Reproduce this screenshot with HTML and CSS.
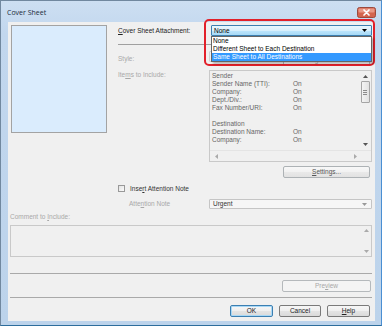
FILE: index.html
```html
<!DOCTYPE html>
<html>
<head>
<meta charset="utf-8">
<link rel="stylesheet" href="styles.css">
</head>
<body>
<div class="window">
  <div class="titlebar">
    <span class="title">Cover Sheet</span>
    <svg class="close" width="19" height="11" viewBox="0 0 19 11">
      <rect x="0.5" y="0.5" width="18" height="10" rx="2" fill="#d3644e" stroke="#9b4a3d"/>
      <rect x="1.5" y="1.5" width="16" height="4" rx="1" fill="#e99886"/>
      <path d="M7 3 L12 8 M12 3 L7 8" stroke="#fff" stroke-width="1.7" stroke-linecap="round"/>
    </svg>
  </div>
  <div class="client">
    <div class="upper">
      <div class="preview"></div>
      <div class="panel">
        <div class="row attach">
          <span class="lbl"><u>C</u>over Sheet Attachment:</span>
          <div class="combo focus"><span>None</span><svg class="arr" width="5" height="3" viewBox="0 0 5 3"><path d="M0 0H5L2.5 3Z" fill="#000"/></svg></div>
        </div>
        <div class="sep"></div>
        <div class="row style">
          <span class="lbl dis">Style:</span>
          <div class="style-ctrls">
            <div class="combo dcombo"></div>
            <div class="btn disabled reg">Registration...</div>
          </div>
        </div>
        <div class="row items">
          <span class="lbl dis">Ite<u>m</u>s to Include:</span>
          <div class="listbox">
            <div class="lb-body">
              <div class="lb-rows">
                <div class="lr"><span>Sender</span><span></span></div>
                <div class="lr"><span>Sender Name (TTI):</span><span>On</span></div>
                <div class="lr"><span>Company:</span><span>On</span></div>
                <div class="lr"><span>Dept./Div.:</span><span>On</span></div>
                <div class="lr"><span>Fax Number/URI:</span><span>On</span></div>
                <div class="lr"><span>&nbsp;</span><span></span></div>
                <div class="lr"><span>Destination</span><span></span></div>
                <div class="lr"><span>Destination Name:</span><span>On</span></div>
                <div class="lr"><span>Company:</span><span>On</span></div>
              </div>
              <div class="vscroll">
                <svg width="5" height="3" viewBox="0 0 5 3"><path d="M0 3H5L2.5 0Z" fill="#555"/></svg>
                <div class="thumb"><i></i><i></i><i></i></div>
                <div class="vfill"></div>
                <svg width="5" height="3" viewBox="0 0 5 3"><path d="M0 0H5L2.5 3Z" fill="#555"/></svg>
              </div>
            </div>
            <div class="hscroll">
              <svg width="3" height="5" viewBox="0 0 3 5"><path d="M3 0V5L0 2.5Z" fill="#aaa"/></svg>
              <svg width="3" height="5" viewBox="0 0 3 5"><path d="M0 0V5L3 2.5Z" fill="#aaa"/></svg>
            </div>
          </div>
        </div>
        <div class="btn settings"><span><u>S</u>ettings...</span></div>
        <div class="check-row">
          <span class="check"></span>
          <span>Inse<u>r</u>t Attention Note</span>
        </div>
        <div class="row attn">
          <span class="lbl dis indent">Atte<u>n</u>tion Note</span>
          <div class="combo ucombo"><span>Urgent</span><svg class="arr" width="5" height="3" viewBox="0 0 5 3"><path d="M0 0H5L2.5 3Z" fill="#999"/></svg></div>
        </div>
      </div>
    </div>
    <div class="comment-lbl dis">Comment to <u>I</u>nclude:</div>
    <div class="textarea">
      <div class="ta-scroll">
        <svg width="5" height="3" viewBox="0 0 5 3"><path d="M0 3H5L2.5 0Z" fill="#aaa"/></svg>
        <svg width="5" height="3" viewBox="0 0 5 3"><path d="M0 0H5L2.5 3Z" fill="#aaa"/></svg>
      </div>
    </div>
    <div class="sep wide s1"></div>
    <div class="btn disabled preview-btn">Pre<u>v</u>iew</div>
    <div class="sep wide s2"></div>
    <div class="buttons">
      <div class="btn default">OK</div>
      <div class="btn">Cancel</div>
      <div class="btn"><u>H</u>elp</div>
    </div>
  </div>

  <div class="highlight"></div>
  <div class="droplist">
    <div class="di">None</div>
    <div class="di">Different Sheet to Each Destination</div>
    <div class="di sel">Same Sheet to All Destinations</div>
  </div>
</div>
</body>
</html>
```
FILE: styles.css
```css
* { box-sizing: border-box; margin: 0; padding: 0; }
body {
  margin: 0;
  font-family: "Liberation Sans", Arial, sans-serif;
  font-size: 6.5px;
  color: #000;
  background: #fff;
}
u { text-decoration: underline; text-underline-offset: 1px; }

.window {
  position: relative;
  width: 382px;
  height: 326px;
  background: linear-gradient(180deg, #cddff2 0%, #c2d7ee 10%, #bcd3eb 100%);
  border: 1px solid #71889f;
  border-right-color: #4a8fd3;
  border-bottom-color: #2d6d9c;
  display: flex;
  flex-direction: column;
  padding: 0 6px 4px 7px;
}

.titlebar {
  height: 21px;
  margin: 0 -6px 0 -7px;
  padding: 0 5px 0 6px;
  display: flex;
  justify-content: space-between;
  align-items: flex-start;
}
.title {
  font-family: "Open Sans", "Liberation Sans", sans-serif;
  font-size: 7px;
  color: #1b2a3a;
  margin-top: 7px;
  line-height: 9px;
}
.close {
  margin-top: 6px;
  flex: none;
  display: block;
}

.client {
  flex: 1;
  background: #f0f0f0;
  display: flex;
  flex-direction: column;
}

.upper {
  display: flex;
  padding: 3px 0 0 3px;
}
.preview {
  width: 96px;
  height: 108px;
  background: #daecfd;
  border: 1px solid #a3a3a3;
  flex: none;
}
.panel {
  margin-left: 11px;
  width: 254px;
  display: flex;
  flex-direction: column;
}
.row {
  display: grid;
  grid-template-columns: 91px 163px;
  align-items: center;
}
.lbl { line-height: 8px; white-space: nowrap; }
.dis { color: #a8a8a8; }
.indent { padding-left: 11px; }

.attach { grid-template-columns: 93px 161px; height: 11px; }
.attach .lbl { color: #222; }
.combo {
  height: 11px;
  border: 1px solid #9c9c9c;
  border-radius: 1px;
  display: flex;
  align-items: center;
  justify-content: space-between;
  padding: 0 4px 0 2px;
  line-height: 8px;
}
.combo.focus {
  border-color: #3c7fb1;
  background: linear-gradient(180deg, #eaf6fd 0%, #d9f0fc 50%, #bee6fd 51%, #a7d9f5 100%);
}

.sep {
  height: 1px;
  background: #a0a0a0;
  margin-top: 8px;
}

.style { margin-top: 6px; height: 12px; }
.style-ctrls { display: flex; justify-content: space-between; }
.dcombo { width: 70px; border-color: #d0d0d0; }
.reg { width: 87px; margin-right: 2px; margin-top: 3px; }

.items { margin-top: 7px; align-items: start; }
.items .lbl { padding-top: 1px; }
.listbox {
  height: 92px;
  border: 1px solid #c9c9c9;
  background: #f0f0f0;
  display: flex;
  flex-direction: column;
}
.lb-body { flex: 1; display: flex; }
.lb-rows { flex: 1; padding: 1px 0 0 2px; color: #666; }
.lr { display: grid; grid-template-columns: 81px auto; height: 8px; line-height: 8px; white-space: nowrap; }
.vscroll {
  width: 10px;
  margin-right: 1px;
  display: flex;
  flex-direction: column;
  align-items: center;
  padding-top: 4px;
  padding-bottom: 4px;
}
.thumb {
  margin-top: 3px;
  width: 9px;
  height: 22px;
  border: 1px solid #a5a5a5;
  border-radius: 1px;
  background: linear-gradient(90deg, #f4f4f4, #e2e2e2);
  display: flex;
  flex-direction: column;
  align-items: center;
  justify-content: center;
  gap: 1px;
}
.thumb i { display: block; width: 4px; height: 1px; background: #8c8c8c; }
.vfill { flex: 1; }
.hscroll {
  height: 11px;
  display: flex;
  justify-content: space-between;
  align-items: center;
  padding: 0 14px 0 5px;
  border-top: 1px solid #e4e4e4;
}

.btn {
  height: 12px;
  border: 1px solid #7a7a7a;
  border-radius: 2px;
  background: linear-gradient(180deg, #f6f6f6 0%, #efefef 50%, #e4e4e4 51%, #dadada 100%);
  display: flex;
  align-items: center;
  justify-content: center;
  line-height: 8px;
  white-space: nowrap;
  color: #222;
}
.btn.disabled {
  border-color: #b5b9bc;
  background: #f4f4f4;
  color: #a8a8a8;
}
.btn.default { border-color: #3c7fb1; box-shadow: inset 0 0 0 1px #a8d8f6; }

.settings {
  margin-top: 4px;
  align-self: flex-end;
  margin-right: 2px;
  width: 87px;
  border-color: #adb2b5;
  background: linear-gradient(180deg, #f8f8f8 0%, #f1f1f1 50%, #e9e9e9 51%, #e2e2e2 100%);
  color: #555;
}

.check-row {
  margin-top: 7px;
  display: flex;
  align-items: center;
  gap: 5px;
  height: 7px;
  line-height: 8px;
  color: #333;
}
.check {
  width: 7px;
  height: 7px;
  border: 1px solid #999;
  background: linear-gradient(135deg, #e2e2e2, #fbfbfb);
}

.attn { margin-top: 7px; height: 10px; }
.ucombo {
  height: 10px;
  border-color: #c5c5c5;
  background: #f6f6f6;
  color: #333;
  padding-left: 3px;
}

.comment-lbl {
  margin: 4px 0 0 2px;
  line-height: 8px;
}
.textarea {
  margin: 4px 0 0 2px;
  width: 362px;
  height: 32px;
  border: 1px solid #c9c9c9;
  display: flex;
  justify-content: flex-end;
}
.ta-scroll {
  width: 10px;
  display: flex;
  flex-direction: column;
  justify-content: space-between;
  align-items: center;
  padding: 3px 0 3px;
}

.sep.wide { margin-left: 2px; width: 362px; background: #a9a9a9; }
.s1 { margin-top: 16px; }
.preview-btn { margin-top: 6px; align-self: flex-end; margin-right: 4px; width: 89px; }
.s2 { margin-top: 5px; }
.buttons {
  margin-top: 7px;
  display: flex;
  justify-content: flex-end;
  gap: 6px;
  margin-right: 5px;
}
.buttons .btn { width: 43px; }
.buttons .btn:nth-child(2) { width: 42px; }

.highlight {
  position: absolute;
  left: 203px;
  top: 18px;
  width: 171px;
  height: 47px;
  border: 2px solid #e2202a;
  border-radius: 5px;
}
.droplist {
  position: absolute;
  left: 210px;
  top: 35px;
  width: 161px;
  height: 26px;
  background: #fff;
  border: 1px solid #646464;
  box-shadow: 2px 2px 2px rgba(0,0,0,0.25);
}
.di {
  height: 8px;
  line-height: 8px;
  padding-left: 1px;
  white-space: nowrap;
}
.di.sel { background: #3399ff; color: #fff; }
```
